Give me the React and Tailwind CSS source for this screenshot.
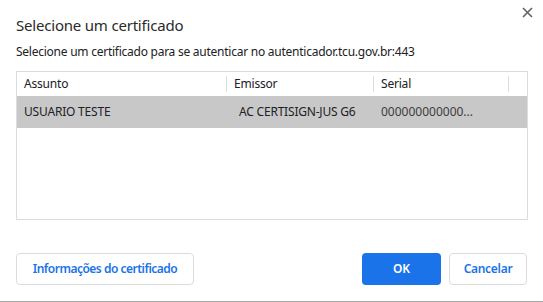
import React from "react";

export default function App() {
  const font = { fontFamily: '"Noto Sans", "Open Sans", sans-serif' };
  return (
    <div
      className="relative w-[543px] h-[302px] bg-white border-b border-[#a7a7a7] flex flex-col text-[#202124]"
      style={font}
    >
      <button className="absolute top-[7px] left-[522px] w-[11px] h-[11px] flex items-center justify-center">
        <svg width="11" height="11" viewBox="0 0 11 11">
          <path d="M1 1 L10 10 M10 1 L1 10" stroke="#5f6368" strokeWidth="1.6" />
        </svg>
      </button>

      <div className="pl-4 pt-[15px] h-[38px] text-[15px] leading-[20px] tracking-[-0.2px] text-[#2a2a2a]">
        Selecione um certificado
      </div>
      <div className="pl-4 pt-[6px] h-[33px] text-[12px] leading-[16px] tracking-[-0.25px]">
        Selecione um certificado para se autenticar no autenticador.tcu.gov.br:443
      </div>

      <div className="mx-4 w-[512px] h-[149px] border border-[#dadce0] flex flex-col">
        <div className="h-[24px] flex items-center text-[12px] tracking-[-0.2px]">
          <div className="w-[209px] pl-[7px] h-full flex items-center">Assunto</div>
          <div className="w-px h-[16px] bg-[#dadce0]" />
          <div className="w-[146px] pl-[7px] h-full flex items-center">Emissor</div>
          <div className="w-px h-[16px] bg-[#dadce0]" />
          <div className="w-[134px] pl-[7px] h-full flex items-center">Serial</div>
          <div className="w-px h-[16px] bg-[#dadce0]" />
        </div>
        <div className="h-[32px] bg-[#c8c8c8] flex items-center text-[12px] tracking-[-0.2px]">
          <div className="w-[210px] pl-[7px]">USUARIO TESTE</div>
          <div className="w-[147px] pl-[12px] whitespace-nowrap">AC CERTISIGN-JUS G6</div>
          <div className="w-[130px] pl-[7px] whitespace-nowrap text-[#3c3c3c] tracking-[0px]">000000000000...</div>
        </div>
      </div>

      <div className="flex px-4 mt-[33px]">
        <button className="w-[178px] h-[32px] rounded-[4px] border border-[#dadce0] text-[#1a73e8] text-[12px] font-semibold tracking-[-0.5px]">
          Informações do certificado
        </button>
        <div className="flex-1" />
        <button className="w-[79px] h-[32px] rounded-[4px] bg-[#1a73e8] text-white text-[12px] font-semibold">
          OK
        </button>
        <button className="ml-[8px] w-[78px] h-[32px] rounded-[4px] border border-[#dadce0] text-[#1a73e8] text-[12px] font-semibold tracking-[-0.3px]">
          Cancelar
        </button>
      </div>
    </div>
  );
}
